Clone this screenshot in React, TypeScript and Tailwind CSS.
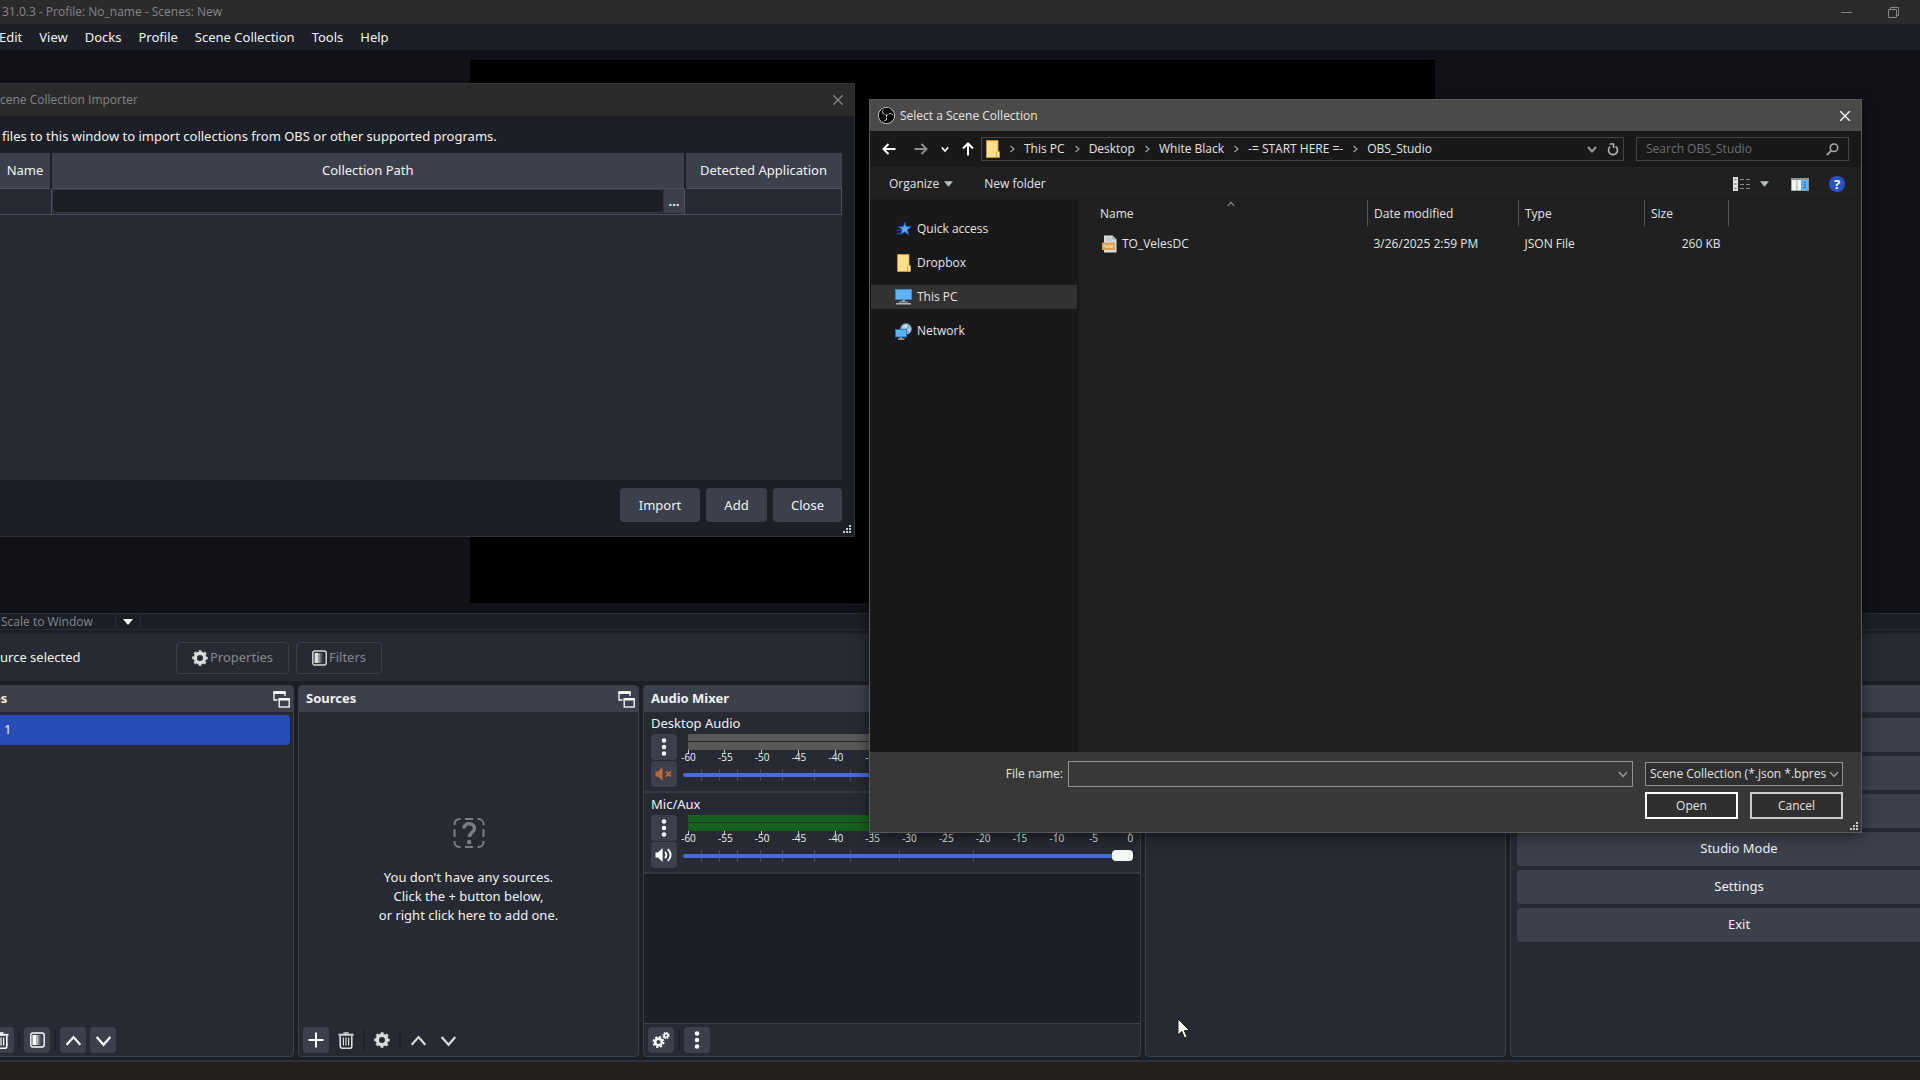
import { useState } from 'react';
import type { ReactNode } from 'react';
import { SiObsstudio } from 'react-icons/si';

const menus = ['Edit', 'View', 'Docks', 'Profile', 'Scene Collection', 'Tools', 'Help'];
const crumbs = ['This PC', 'Desktop', 'White Black', '-= START HERE =-', 'OBS_Studio'];
const levels = [-60, -55, -50, -45, -40, -35, -30, -25, -20, -15, -10, -5, 0];
const notches = [4, 8, 12, 17, 22, 29, 37, 48, 64.5];

function Chevron({ dir = 'down', size = 10, className = '' }: { dir?: 'up' | 'down' | 'right'; size?: number; className?: string }) {
  const d = { up: 'M1 7.5 5 3l4 4.5', down: 'M1 3l4 4.5L9 3', right: 'M3.5 2 7 5 3.5 8' }[dir];
  return (
    <svg width={size} height={size} viewBox="0 0 10 10" fill="none" stroke="currentColor" strokeWidth="1.3" className={`shrink-0 ${className}`}>
      <path d={d} />
    </svg>
  );
}

function Gear({ size = 16 }: { size?: number }) {
  return (
    <svg width={size} height={size} viewBox="0 0 16 16" fill="none" stroke="currentColor" className="shrink-0">
      <circle cx="8" cy="8" r="4.7" strokeWidth="3.4" />
      <circle cx="8" cy="8" r="6.8" strokeWidth="2" strokeDasharray="2.9 2.44" strokeDashoffset="1.45" />
    </svg>
  );
}

function Gears() {
  return (
    <svg width="18" height="18" viewBox="0 0 18 18" fill="none" stroke="currentColor">
      <circle cx="6.5" cy="11" r="3.4" strokeWidth="2.6" />
      <circle cx="6.5" cy="11" r="5.2" strokeWidth="1.6" strokeDasharray="2.2 1.88" />
      <circle cx="14" cy="4.5" r="1.9" strokeWidth="1.6" />
      <circle cx="14" cy="4.5" r="3.1" strokeWidth="1.2" strokeDasharray="1.3 1.13" />
    </svg>
  );
}

function FilterIcon() {
  return (
    <svg width="15" height="16" viewBox="0 0 15 16" className="shrink-0">
      <rect x="0.8" y="1" width="13.4" height="14" rx="2" fill="none" stroke="currentColor" strokeWidth="1.4" />
      <rect x="2.5" y="3" width="4" height="10" fill="currentColor" />
      <rect x="6.5" y="3" width="2" height="10" fill="currentColor" opacity="0.6" />
      <rect x="8.5" y="3" width="2" height="10" fill="currentColor" opacity="0.25" />
    </svg>
  );
}

function Trash() {
  return (
    <svg width="16" height="17" viewBox="0 0 16 17" fill="none" stroke="currentColor">
      <path d="M0.5 2.8h15" strokeWidth="2" />
      <path d="M5.5 1h5" strokeWidth="1.6" />
      <path d="M2.2 4v10.2a2 2 0 0 0 2 2h7.6a2 2 0 0 0 2-2V4" strokeWidth="1.6" />
      <path d="M5.4 5.5v8M8 5.5v8M10.6 5.5v8" strokeWidth="1.2" />
    </svg>
  );
}

function Popout() {
  return (
    <svg width="17" height="17" viewBox="0 0 17 17" fill="none" stroke="#fefefe">
      <path d="M4.5 9H1V1h11v4" strokeWidth="1.3" />
      <path d="M0.5 1.8h12" strokeWidth="2.4" />
      <rect x="6.2" y="8" width="10" height="8" strokeWidth="1.3" />
      <path d="M5.6 8.2h11.2" strokeWidth="2.4" />
    </svg>
  );
}

function Dots() {
  return (
    <svg width="6" height="18" viewBox="0 0 6 18" fill="#fefefe">
      <circle cx="3" cy="2.5" r="2.2" />
      <circle cx="3" cy="9" r="2.2" />
      <circle cx="3" cy="15.5" r="2.2" />
    </svg>
  );
}

function Speaker({ muted = false }: { muted?: boolean }) {
  return (
    <svg width="18" height="16" viewBox="0 0 18 16" fill="none" stroke={muted ? '#b5693c' : '#fefefe'} strokeWidth="1.9">
      <path d="M0.5 5.5H3L7.6 1v14L3 10.5H0.5z" fill={muted ? '#b5693c' : '#fefefe'} stroke="none" />
      {muted ? (
        <path d="M11 5.5l5 5M16 5.5l-5 5" />
      ) : (
        <path d="M10 4.8q2.6 3.2 0 6.4M12.8 2.2q5.6 5.8 0 11.6" />
      )}
    </svg>
  );
}

function Folder() {
  return (
    <svg width="14" height="18" viewBox="0 0 14 18" className="shrink-0">
      <path d="M0.5 0.5h11.5v10l1.5 1.5v5.5H0.5z" fill="#fddf8b" stroke="#cf9a4c" strokeWidth="0.8" />
      <path d="M10.5 17v-4.5l1.5-1.8" stroke="#cf9a4c" strokeWidth="0.8" fill="none" />
    </svg>
  );
}

function Star() {
  return (
    <svg width="16" height="14" viewBox="0 0 16 14" className="shrink-0">
      <path d="M8.8 0.5l1.5 4.2 4.7.1-3.7 2.9 1.3 4.8-3.9-2.7-4.1 2.7 1.5-4.8L3 4.8l4.4-.1z" fill="#58aef5" stroke="#2f5fd0" strokeWidth="0.9" />
      <path d="M1.5 5l2.5.5M0.5 8.5l4-.5M0.5 12l3.5-1" stroke="#2b57c4" strokeWidth="1" />
    </svg>
  );
}

function Monitor() {
  return (
    <svg width="17" height="16" viewBox="0 0 17 16" className="shrink-0">
      <rect x="0.5" y="0.5" width="16" height="10" fill="#5db3f5" stroke="#3d86d4" strokeWidth="0.8" />
      <path d="M7 11h3v1.5H7z" fill="#9fb0ba" />
      <path d="M4 12.4h9v1H4zM1 14h15v1.6H1z" fill="#a9b7bd" />
    </svg>
  );
}

function NetworkIcon() {
  return (
    <svg width="17" height="17" viewBox="0 0 17 17" className="shrink-0">
      <circle cx="11" cy="6" r="5.7" fill="#7fb2cf" />
      <path d="M8 2.5q3-2 5 .5l-2 2-3 .5zM13 6l3-.5-1.5 4.5z" fill="#c9dbe2" />
      <rect x="0.5" y="6.5" width="11" height="7.5" fill="#5db3f5" stroke="#2b6cb5" strokeWidth="0.9" />
      <path d="M5 14.5h2v1H5zM3 15.5h6.5v1.2H3z" fill="#a9b7bd" />
    </svg>
  );
}

function JsonFile() {
  return (
    <svg width="15" height="18" viewBox="0 0 15 18" className="shrink-0">
      <path d="M2 0.5h8.5l4 4v13H2z" fill="#d5dfdc" />
      <path d="M10.5 0.5v4h4z" fill="#93a39f" />
      <path d="M4 3h5M4 5h6" stroke="#a5b4b0" strokeWidth="0.8" />
      <rect x="0" y="7.5" width="13" height="7.5" fill="#d9a154" />
      <path d="M2 12.5v-2h2v2h2v-2h2v2h1.5v-2H11v2" stroke="#f4e3c4" strokeWidth="0.9" fill="none" />
    </svg>
  );
}

function Grip() {
  return (
    <svg width="10" height="10" viewBox="0 0 10 10" fill="#c8c8c8">
      <path d="M7 1h2v2H7zM4 4h2v2H4zM7 4h2v2H7zM1 7h2v2H1zM4 7h2v2H4zM7 7h2v2H7z" />
    </svg>
  );
}

function Arrow({ d, className }: { d: string; className: string }) {
  return (
    <svg width="14" height="14" viewBox="0 0 14 14" fill="none" stroke="currentColor" strokeWidth="2" className={className}>
      <path d={d} />
    </svg>
  );
}

function Triangle({ className = '' }: { className?: string }) {
  return (
    <svg width="10" height="6" viewBox="0 0 10 6" fill="currentColor" className={className}>
      <path d="M0 0h10L5 6z" />
    </svg>
  );
}

function Tool({ label, flat = false, children }: { label: string; flat?: boolean; children: ReactNode }) {
  return (
    <button
      aria-label={label}
      className={`w-[26px] h-[26px] rounded flex items-center justify-center ${flat ? 'text-[#d5dcd9]' : 'bg-[#3c404d] text-[#fefefe]'}`}
    >
      {children}
    </button>
  );
}

function Split() {
  return <span className="w-0.5 h-5 mx-1 bg-[#1f2129]" />;
}

function Dock({ title, popout = false, children }: { title: string; popout?: boolean; children?: ReactNode }) {
  return (
    <section className="min-w-0 flex flex-col rounded border border-[#3c404d] bg-[#272a33] overflow-hidden">
      <header className="h-[26px] shrink-0 px-[7px] flex items-center justify-between bg-[#3c404d]">
        <h2 className="font-bold">{title}</h2>
        {popout && (
          <button aria-label={`Detach ${title}`} className="-mr-1">
            <Popout />
          </button>
        )}
      </header>
      {children}
    </section>
  );
}

function Channel({ name, muted = false }: { name: string; muted?: boolean }) {
  const [volume, setVolume] = useState(100);
  const bar = muted ? 'bg-[#595857]' : 'bg-[#17611f]';

  return (
    <div className="h-[81px] px-[7px] pt-px border-b-2 border-[#343743]">
      <label htmlFor={name} className="block leading-5 mb-px">{name}</label>
      <div className="flex gap-[6px]">
        <div className="flex flex-col gap-px">
          <Tool label={`${name} options`}>
            <Dots />
          </Tool>
          <Tool label={`Mute ${name}`}>
            <Speaker muted={muted} />
          </Tool>
        </div>
        <div className="flex-1">
          <div className="ml-[5px] mr-[3px]">
            <div className={`h-[7px] mb-px ${bar}`} />
            <div className={`h-2 ${bar}`} />
            <div className="flex justify-between h-[13px]">
              {levels.map((level) => (
                <span key={level} className="w-0 flex flex-col items-center text-[10px] leading-[11px] font-['Open_Sans',sans-serif]">
                  <i className="w-px h-1 bg-[#c8c8c8] shrink-0" />
                  <span className="-mt-[2px] pl-px">{level}</span>
                </span>
              ))}
            </div>
          </div>
          <div className="relative h-6">
            {notches.map((n) => (
              <i key={n} className="absolute top-[6px] w-px h-3 bg-[#4a4e60]" style={{ left: `${n}%` }} />
            ))}
            <input
              id={name}
              type="range"
              min={0}
              max={100}
              value={volume}
              onChange={(e) => setVolume(Number(e.target.value))}
              className="relative block w-full h-6 appearance-none bg-transparent [&::-webkit-slider-runnable-track]:h-1 [&::-webkit-slider-runnable-track]:rounded-sm [&::-webkit-slider-runnable-track]:bg-[#476bd7] [&::-webkit-slider-thumb]:appearance-none [&::-webkit-slider-thumb]:w-[21px] [&::-webkit-slider-thumb]:h-[11px] [&::-webkit-slider-thumb]:-mt-[4px] [&::-webkit-slider-thumb]:rounded [&::-webkit-slider-thumb]:bg-[#f5f7f5]"
            />
          </div>
        </div>
      </div>
    </div>
  );
}

function Importer() {
  const [path, setPath] = useState('');

  return (
    <div role="dialog" aria-label="Scene Collection Importer" className="absolute left-0 top-[83px] w-[855px] border border-l-0 border-[#333335] bg-[#1d1f26]">
      <div className="h-8 pr-[10px] flex items-center justify-between bg-[#2b2b2b] text-[#85858a] text-xs font-['Open_Sans',sans-serif]">
        <span>cene Collection Importer</span>
        <button aria-label="Close window">
          <Arrow d="M1.5 1.5l11 11M12.5 1.5l-11 11" className="w-3 h-3 stroke-[1.5]" />
        </button>
      </div>
      <div className="pr-3 pb-[14px]">
        <p className="h-[37px] pl-[2px] flex items-center pt-[5px]">files to this window to import collections from OBS or other supported programs.</p>
        <div className="h-[327px] bg-[#272a33]">
          <table className="w-full table-fixed border-collapse">
            <colgroup>
              <col className="w-[51px]" />
              <col />
              <col className="w-[157px]" />
            </colgroup>
            <thead>
              <tr className="h-[35px] bg-[#3c404d]">
                <th className="p-0 font-normal border-r-2 border-[#1d1f26]">Name</th>
                <th className="p-0 font-normal border-r-2 border-[#1d1f26]">Collection Path</th>
                <th className="p-0 font-normal">Detected Application</th>
              </tr>
            </thead>
            <tbody>
              <tr className="h-[26px] border-y border-[#4a4f61]">
                <td className="border-r border-[#4a4f61]" />
                <td className="p-0 border-r border-[#4a4f61]">
                  <div className="flex">
                    <input
                      aria-label="Collection Path"
                      value={path}
                      onChange={(e) => setPath(e.target.value)}
                      className="flex-1 h-6 px-2 rounded border border-[#343845] bg-[#1d1f26] outline-none"
                    />
                    <button aria-label="Browse" className="w-5 h-6 bg-[#3c404d] leading-6 font-bold">...</button>
                  </div>
                </td>
                <td className="border-r border-[#4a4f61]" />
              </tr>
            </tbody>
          </table>
        </div>
        <div className="pt-2 flex justify-end gap-[6px]">
          <button className="w-20 h-[34px] pt-px rounded bg-[#3c404d]">Import</button>
          <button className="w-[61px] h-[34px] pt-px rounded bg-[#3c404d]">Add</button>
          <button className="w-[69px] h-[34px] pt-px rounded bg-[#3c404d]">Close</button>
        </div>
      </div>
      <div className="absolute right-[2px] bottom-[2px]">
        <Grip />
      </div>
    </div>
  );
}

function Place({ icon, label, active = false }: { icon: ReactNode; label: string; active?: boolean }) {
  return (
    <li>
      <a href="#" className={`h-6 pl-6 flex items-center gap-[5px] ${active ? 'bg-[#323233]' : ''}`}>
        <span className="w-[17px] flex justify-center">{icon}</span>
        {label}
      </a>
    </li>
  );
}

function FileDialog() {
  const [name, setName] = useState('');
  const [query, setQuery] = useState('');

  return (
    <div
      role="dialog"
      aria-label="Select a Scene Collection"
      className="absolute left-[869px] top-[99px] w-[993px] flex flex-col border border-[#5b5a59] bg-[#191919] text-[#e4e4e4] text-xs font-['Open_Sans',sans-serif] shadow-[0_3px_14px_rgba(0,0,0,0.5)]"
    >
      <div className="h-[31px] pl-2 pr-[10px] flex items-center bg-[#4c4a48]">
        <span className="w-[17px] h-[17px] mr-[5px] rounded-full bg-black flex items-center justify-center">
          <SiObsstudio size={17} />
        </span>
        Select a Scene Collection
        <button aria-label="Close" className="ml-auto text-white">
          <Arrow d="M1.5 1.5l11 11M12.5 1.5l-11 11" className="w-3 h-3 stroke-[1.5]" />
        </button>
      </div>

      {/* Address bar */}
      <div className="h-9 px-3 flex items-center">
        <button aria-label="Back" className="w-[14px] mr-[18px]">
          <Arrow d="M13.5 7H1.5M6.5 2l-5 5 5 5" className="text-white" />
        </button>
        <button aria-label="Forward" className="w-[14px] mr-[13px]">
          <Arrow d="M0.5 7h12M7.5 2l5 5-5 5" className="text-[#8c8c8c]" />
        </button>
        <button aria-label="Recent" className="w-2 mr-3">
          <Chevron size={8} className="text-white stroke-2" />
        </button>
        <button aria-label="Up" className="w-[14px] mr-[6px]">
          <Arrow d="M7 13.5V1.5M2 6.5l5-5 5 5" className="text-white" />
        </button>
        <nav className="flex-1 h-6 px-1 flex items-center border border-[#454545]">
          <Folder />
          {crumbs.map((crumb) => (
            <span key={crumb} className="flex items-center">
              <Chevron dir="right" size={10} className="mx-[7px] text-[#9a9a9a]" />
              <a href="#" className="whitespace-nowrap">{crumb}</a>
            </span>
          ))}
          <button aria-label="Previous locations" className="ml-auto mr-[10px] text-[#9a9a9a]">
            <Chevron size={10} className="stroke-2" />
          </button>
          <button aria-label="Refresh" className="text-[#b0b0b0]">
            <svg width="12" height="13" viewBox="0 0 12 13" fill="none" stroke="currentColor" strokeWidth="1.6">
              <path d="M8.6 3.5A4.5 4.5 0 1 1 3.2 3.6" />
              <path d="M2.6 1h4v4" />
            </svg>
          </button>
        </nav>
        <div className="w-[213px] h-6 ml-3 px-[9px] flex items-center border border-[#454545]">
          <input
            aria-label="Search OBS_Studio"
            placeholder="Search OBS_Studio"
            value={query}
            onChange={(e) => setQuery(e.target.value)}
            className="flex-1 min-w-0 bg-transparent outline-none placeholder:text-[#6e6e6e]"
          />
          <svg width="13" height="13" viewBox="0 0 13 13" fill="none" stroke="#a8a8a8" strokeWidth="1.5">
            <circle cx="8" cy="4.8" r="3.8" />
            <path d="M5.2 7.6 0.8 12.2" strokeWidth="1.9" />
          </svg>
        </div>
      </div>

      {/* Toolbar */}
      <div className="h-[33px] pt-[2px] pl-[19px] pr-4 flex items-center bg-[#202020] border-b border-[#1b1b1b]">
        <button className="flex items-center gap-[5px] mr-[31px]">
          Organize
          <Triangle className="w-[9px] text-[#b9c2bf]" />
        </button>
        <button>New folder</button>
        <button aria-label="Change view" className="ml-auto mr-[22px] flex items-center gap-[9px]">
          <svg width="18" height="14" viewBox="0 0 18 14">
            <path d="M0 0h5v14H0z" fill="#dfe3e1" />
            <path d="M1.5 1.5h2v2h-2zM1.5 6h2v2h-2zM1.5 10.5h2v2h-2z" fill="#87908d" />
            <path d="M7 2.5h4M13 2.5h4M7 7.5h4M13 7.5h4M7 11.5h4M13 11.5h4" stroke="#8a8a8a" strokeWidth="1" />
          </svg>
          <Triangle className="w-[9px] text-[#b9c2bf]" />
        </button>
        <button aria-label="Preview pane" className="mr-5">
          <svg width="18" height="13" viewBox="0 0 18 13">
            <path d="M0 0h18v13H0z" fill="#8e9693" />
            <path d="M0.8 2h4.7v10.2H0.8zM6.3 2H10v10.2H6.3z" fill="#f2f5f3" />
            <path d="M10.6 2H17v10.2h-6.4z" fill="#5db3f5" />
            <path d="M12.5 4.5H15M12.5 7H15M12.5 9.5H15" stroke="#1d63b8" strokeWidth="1" />
          </svg>
        </button>
        <button aria-label="Help" className="w-4 h-4 rounded-full bg-[#2850c8] text-white text-[13px] leading-4 font-bold">?</button>
      </div>

      <div className="h-[552px] flex">
        <ul className="w-[211px] pt-[17px] pl-px pr-[2px] flex flex-col gap-[10px] border-r-2 border-[#1e1e1e]">
          <Place icon={<Star />} label="Quick access" />
          <Place icon={<Folder />} label="Dropbox" />
          <Place icon={<Monitor />} label="This PC" active />
          <Place icon={<NetworkIcon />} label="Network" />
        </ul>
        <div className="flex-1 bg-[#202020]">
          <table className="w-[648px] table-fixed border-collapse text-left">
            <colgroup>
              <col />
              <col className="w-[151px]" />
              <col className="w-[126px]" />
              <col className="w-[84px]" />
            </colgroup>
            <thead>
              <tr className="h-[26px]">
                <th className="relative p-0 pt-[2px] pl-[19px] font-normal border-r border-[#555]">
                  Name
                  <Chevron dir="up" size={8} className="absolute left-[146px] top-0 text-[#9a9a9a]" />
                </th>
                <th className="p-0 pt-[2px] pl-[6px] font-normal border-r border-[#555]">Date modified</th>
                <th className="p-0 pt-[2px] pl-[6px] font-normal border-r border-[#555]">Type</th>
                <th className="p-0 pt-[2px] pl-[6px] font-normal border-r border-[#555]">Size</th>
              </tr>
            </thead>
            <tbody>
              <tr className="h-9">
                <td className="p-0 pl-[21px]">
                  <div className="flex items-center gap-[5px]">
                    <JsonFile />
                    TO_VelesDC
                  </div>
                </td>
                <td className="p-0 pl-[6px]">3/26/2025 2:59 PM</td>
                <td className="p-0 pl-[6px]">JSON File</td>
                <td className="p-0 pr-2 text-right">260 KB</td>
              </tr>
            </tbody>
          </table>
        </div>
      </div>

      <div className="h-20 pr-[18px] pt-[9px] flex flex-col items-end gap-[5px] bg-[#383838]">
        <div className="w-full flex items-center justify-end">
          <label htmlFor="file-name" className="mr-[5px]">File name:</label>
          <div className="w-[565px] h-[26px] px-1 flex items-center border border-[#8f9391]">
            <input id="file-name" value={name} onChange={(e) => setName(e.target.value)} className="flex-1 bg-transparent outline-none" />
            <Chevron className="text-[#a0a0a0]" />
          </div>
          <div className="relative ml-3 w-[198px]">
            <select aria-label="File type" className="block w-full h-6 pl-1 pr-4 appearance-none border border-[#8f9391] bg-[#2f2f2f] overflow-hidden whitespace-nowrap">
              <option>Scene Collection (*.json *.bpres</option>
            </select>
            <Chevron className="absolute right-1 top-[7px] text-[#a0a0a0] pointer-events-none" />
          </div>
        </div>
        <div className="flex gap-3">
          <button className="w-[93px] h-[27px] border-2 border-white bg-[#2f2f2f]">Open</button>
          <button className="w-[93px] h-[27px] border-2 border-[#c9cecc] bg-[#2f2f2f]">Cancel</button>
        </div>
      </div>
      <div className="absolute right-[2px] bottom-px">
        <Grip />
      </div>
    </div>
  );
}

export default function App() {
  return (
    <div className="relative h-screen overflow-hidden flex flex-col bg-[#1d1f26] text-[#f2f2f2] text-[13px] font-['Noto_Sans',sans-serif]">
      <div className="h-6 pl-[2px] pr-[21px] flex items-center bg-[#2b2b2b] text-[#85858a] text-xs font-['Open_Sans',sans-serif]">
        31.0.3 - Profile: No_name - Scenes: New
        <button aria-label="Minimize" className="ml-auto mr-[36px]">
          <svg width="11" height="11" viewBox="0 0 11 11" stroke="currentColor">
            <path d="M0 5.5h11" />
          </svg>
        </button>
        <button aria-label="Restore">
          <svg width="11" height="11" viewBox="0 0 11 11" fill="none" stroke="currentColor">
            <path d="M0.5 2.5h8v8h-8zM2.5 2.5v-2h8v8h-2" />
          </svg>
        </button>
      </div>
      <nav className="h-[26px] pt-[2px] -ml-px flex items-center gap-[17px]">
        {menus.map((menu) => (
          <button key={menu}>{menu}</button>
        ))}
      </nav>

      {/* Preview */}
      <div className="flex-1 flex bg-[#111217] py-[10px] pl-[470px] pr-[485px]">
        <div className="flex-1 bg-black" />
      </div>
      <div className="h-[17px] pl-px flex items-center border-y border-[#2a2d36] text-[#85858a] text-xs font-['Open_Sans',sans-serif]">
        <span className="w-[114px] pt-px">Scale to Window</span>
        <button aria-label="Preview scale" className="w-[26px] h-full flex items-center justify-center border-x border-[#2a2d36] text-white">
          <Triangle />
        </button>
      </div>

      {/* Context bar */}
      <div className="mt-1 h-[47px] flex items-center gap-[7px] bg-[#272a33]">
        <span className="w-[169px]">urce selected</span>
        <button className="w-[113px] h-8 flex items-center justify-center gap-[2px] rounded border border-[#3c404d] text-[#85868c]">
          <span className="text-[#d5dcd9]"><Gear /></span>
          Properties
        </button>
        <button className="w-[86px] h-8 flex items-center justify-center gap-[2px] rounded border border-[#3c404d] text-[#85868c]">
          <span className="text-[#d5dcd9]"><FilterIcon /></span>
          Filters
        </button>
      </div>

      {/* Docks */}
      <div className="mt-1 -mr-[48px] h-[372px] grid gap-1 grid-cols-[294fr_341fr_498fr_361fr_458fr]">
        <div className="-ml-[15px] grid">
          <Dock title="es" popout>
            <div className="flex-1 pt-[3px] pr-[3px]">
              <div className="h-[30px] pl-[18px] flex items-center rounded bg-[#284cb8]">1</div>
            </div>
            <div className="mb-[3px] ml-[2px] flex items-center">
              <Tool label="Remove scene"><Trash /></Tool>
              <Split />
              <Tool label="Scene filters"><FilterIcon /></Tool>
              <Split />
              <Tool label="Move scene up"><Chevron dir="up" size={17} /></Tool>
              <span className="w-1" />
              <Tool label="Move scene down"><Chevron size={17} /></Tool>
            </div>
          </Dock>
        </div>
        <Dock title="Sources" popout>
          <div className="flex-1 pt-[105px] flex flex-col items-center text-center leading-[19px]">
            <svg width="32" height="32" viewBox="0 0 32 32" fill="none" stroke="#7c7d80" strokeWidth="2" className="mb-[19px]">
              <path d="M1.5 8V7a5 5 0 0 1 5-5h1M12 2h8M24.5 2h1a5 5 0 0 1 5 5v1M30.5 12v8M30.5 24v1a5 5 0 0 1-5 5h-1M20 30h-8M7.5 30h-1a5 5 0 0 1-5-5v-1M1.5 20v-8" />
              <path d="M11 11.5c0-6.5 10.500-6 10.500 0 0 4-5.200 4-5.200 8.500" strokeWidth="3.5" />
              <circle cx="16.2" cy="25" r="2.2" fill="#7c7d80" stroke="none" />
            </svg>
            <p>
              You don't have any sources.
              <br />
              Click the + button below,
              <br />
              or right click here to add one.
            </p>
          </div>
          <div className="mb-[3px] ml-1 flex items-center">
            <Tool label="Add source">
              <svg width="16" height="16" viewBox="0 0 16 16" stroke="currentColor" strokeWidth="2">
                <path d="M8 0.5v15M0.5 8h15" />
              </svg>
            </Tool>
            <span className="w-1" />
            <Tool label="Remove source" flat><Trash /></Tool>
            <Split />
            <Tool label="Source properties" flat><Gear /></Tool>
            <Split />
            <Tool label="Move source up" flat><Chevron dir="up" size={17} /></Tool>
            <span className="w-1" />
            <Tool label="Move source down" flat><Chevron size={17} /></Tool>
          </div>
        </Dock>
        <Dock title="Audio Mixer">
          <Channel name="Desktop Audio" muted />
          <Channel name="Mic/Aux" />
          <div className="flex-1 bg-[#1d1f26] border-b border-[#3c404d]" />
          <div className="py-[3px] pl-1 flex items-center">
            <Tool label="Advanced audio"><Gears /></Tool>
            <Split />
            <Tool label="Mixer menu"><Dots /></Tool>
          </div>
        </Dock>
        <Dock title="" />
        <Dock title="">
          <div className="pt-[6px] px-[6px] flex flex-col gap-1">
            <button aria-label="Start Streaming" className="h-[34px] rounded bg-[#3c404d]" />
            <button aria-label="Start Recording" className="h-[34px] rounded bg-[#3c404d]" />
            <button aria-label="Start Virtual Camera" className="h-[34px] rounded bg-[#3c404d]" />
            <button className="h-[34px] rounded bg-[#3c404d]">Studio Mode</button>
            <button className="h-[34px] rounded bg-[#3c404d]">Settings</button>
            <button className="h-[34px] rounded bg-[#3c404d]">Exit</button>
          </div>
        </Dock>
      </div>
      <footer className="mt-[3px] h-5 border-t-2 border-[#2f323c] bg-[#24201d]" />

      <Importer />
      <FileDialog />

      {/* Mouse pointer */}
      <svg width="14" height="22" viewBox="0 0 14 22" className="absolute left-[1177px] top-[1018px]">
        <path d="M1 1v16l3.8-3.5 2.7 6.5 2.5-1.1-2.7-6.3h5.2z" fill="#fff" stroke="#111" strokeWidth="0.9" />
      </svg>
    </div>
  );
}
